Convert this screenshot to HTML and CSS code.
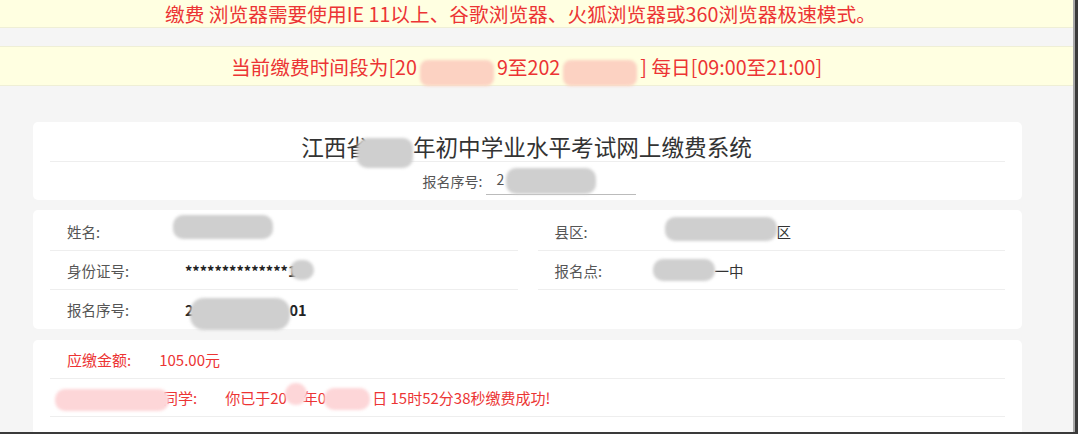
FILE: index.html
```html
<!DOCTYPE html>
<html lang="zh-CN">
<head>
<meta charset="utf-8">
<title>江西省初中学业水平考试网上缴费系统</title>
<link rel="stylesheet" href="styles.css">
</head>
<body>
<div class="page">
  <div class="notice notice-top">缴费 浏览器需要使用IE 11以上、谷歌浏览器、火狐浏览器或360浏览器极速模式。</div>
  <div class="notice notice-time">当前缴费时间段为[20<span class="mask mask-peach mask-date"></span>9至202<span class="mask mask-peach mask-date"></span>] 每日[09:00至21:00]</div>

  <div class="card card-head">
    <div class="title">江西省<span class="mask mask-gray mask-year"></span>年初中学业水平考试网上缴费系统</div>
    <div class="search">
      <span class="search-label">报名序号:</span>
      <span class="search-input">2<span class="mask mask-gray mask-input"></span></span>
    </div>
  </div>

  <div class="card card-info">
    <div class="col">
      <div class="row"><span class="label">姓名:</span><span class="value"><span class="mask mask-gray mask-name"></span></span></div>
      <div class="row"><span class="label">身份证号:</span><span class="value strong">**************1<span class="mask mask-gray mask-id"></span></span></div>
      <div class="row last"><span class="label">报名序号:</span><span class="value strong">2<span class="mask mask-gray mask-no"></span>01</span></div>
    </div>
    <div class="col">
      <div class="row"><span class="label">县区:</span><span class="value"><span class="mask mask-gray mask-county"></span>区</span></div>
      <div class="row"><span class="label">报名点:</span><span class="value"><span class="mask mask-gray mask-school"></span>一中</span></div>
      <div class="row last"></div>
    </div>
  </div>

  <div class="card card-pay">
    <div class="pay-row"><span class="pay-label">应缴金额:</span><span class="pay-value">105.00元</span></div>
    <div class="pay-row"><span class="pay-label"><span class="mask mask-pink mask-student"></span>同学:</span><span class="pay-value">你已于20<span class="mask mask-pink mask-dot"></span>年0<span class="mask mask-pink mask-day"></span>日 15时52分38秒缴费成功!</span></div>
    <div class="pay-row empty"></div>
  </div>
</div>
</body>
</html>
```

FILE: styles.css
```css
* { box-sizing: border-box; }

html, body {
  margin: 0;
  padding: 0;
  background: #3a3a3a;
}

body {
  font-family: "Noto Sans CJK SC", "Noto Sans", sans-serif;
  color: #444;
}

.page {
  width: 1075px;
  height: 432px;
  overflow: hidden;
  background: #f5f5f5;
  border-right: 2px solid #a8a8a8;
}

.notice {
  background: #ffffe1;
  color: #ec3434;
  font-size: 19.7px;
  text-align: center;
  white-space: nowrap;
}

.notice-top {
  height: 28px;
  line-height: 27px;
  border-bottom: 1px solid #efefd6;
  padding-right: 32px;
}

.notice-time {
  margin-top: 18px;
  height: 40px;
  line-height: 40px;
  border-top: 1px solid #efefd6;
  border-bottom: 1px solid #efefd6;
  padding-right: 20px;
}

.card {
  background: #fff;
  border-radius: 5px;
  margin-left: 33px;
  width: 989px;
  padding: 0 17px;
}

.card-head {
  margin-top: 36px;
  height: 78px;
  padding-top: 12px;
}

.title {
  height: 28px;
  line-height: 26px;
  font-size: 22.6px;
  color: #333;
  text-align: center;
  border-bottom: 1px solid #eeeeee;
  white-space: nowrap;
  padding-right: 2px;
}

.search {
  display: flex;
  justify-content: center;
  align-items: center;
  height: 38px;
  font-size: 14px;
  color: #555;
  padding-left: 4px;
}

.search-input {
  display: inline-block;
  width: 150px;
  margin-left: 4px;
  padding-left: 10px;
  border-bottom: 1px solid #bbb;
  line-height: 18px;
  color: #555;
}

.card-info {
  margin-top: 10px;
  height: 119px;
  padding-top: 2px;
  display: grid;
  grid-template-columns: 1fr 1fr;
  column-gap: 20px;
}

.row {
  height: 39px;
  display: flex;
  align-items: center;
  border-bottom: 1px solid #eeeeee;
  padding-left: 17px;
  font-size: 14.5px;
  color: #444;
}

.row.last { border-bottom: none; height: 38px; }

.label {
  width: 118px;
  flex: none;
  color: #555;
}

.value {
  display: flex;
  align-items: center;
  color: #333;
  white-space: nowrap;
}

.value.strong { font-weight: 600; color: #222; }

.card-pay {
  margin-top: 11px;
  height: 120px;
  padding-top: 1px;
  color: #ec3434;
  font-size: 15px;
}

.pay-row {
  height: 38px;
  display: flex;
  align-items: center;
  border-bottom: 1px solid #eeeeee;
  padding-left: 17px;
  white-space: nowrap;
}

.pay-row.empty { border-bottom: none; }

.pay-label {
  display: flex;
  align-items: center;
  margin-right: 28px;
}

.pay-value {
  display: flex;
  align-items: center;
}

/* privacy masks */
.mask {
  display: inline-block;
  vertical-align: middle;
  flex: none;
  filter: blur(1.5px);
  position: relative;
  z-index: 1;
}

.mask-gray { background: #cfcfcf; border-radius: 10px; }
.mask-peach { background: #fcd2c2; border-radius: 8px; }
.mask-pink { background: #fdd6d8; border-radius: 10px; }

.mask-date { width: 74px; height: 26px; margin: 0 3px -6px 3px; }
.mask-year { width: 56px; height: 30px; margin: 0 0 -6px -12px; }
.mask-input { width: 90px; height: 26px; margin-left: 2px; }
.mask-name { width: 100px; height: 24px; margin-left: -12px; margin-top: -8px; }
.mask-id { width: 24px; height: 20px; margin-left: -6px; }
.mask-no { width: 100px; height: 32px; margin-left: -4px; margin-top: 10px; border-radius: 14px; }
.mask-county { width: 112px; height: 24px; margin-left: -8px; margin-top: -4px; }
.mask-school { width: 62px; height: 22px; margin-left: -20px; }
.mask-student { width: 114px; height: 22px; margin-left: -12px; margin-right: -6px; margin-top: 4px; }
.mask-dot { width: 22px; height: 22px; border-radius: 50%; margin: -8px -4px 0 -2px; }
.mask-day { width: 46px; height: 22px; margin: 2px 2px 0 -2px; }
```
